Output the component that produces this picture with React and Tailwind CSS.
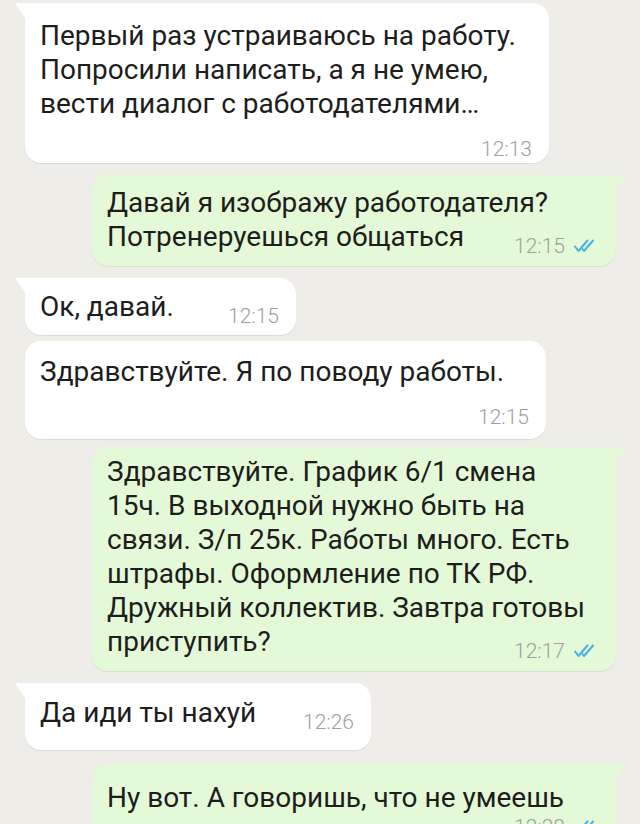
import React from 'react';

// pt / pb / gap are tuned per bubble to follow the screenshot
const messages = [
  {
    id: 1,
    out: false,
    tail: true,
    width: 'w-[524px]',
    pad: 'pt-[16px] pb-[6px]',
    gap: '',
    lines: ['Первый раз устраиваюсь на работу.', 'Попросили написать, а я не умею,', 'вести диалог с работодателями…'],
    time: '12:13',
    timeRow: 'mt-[16px]',
  },
  {
    id: 2,
    out: true,
    tail: true,
    width: 'w-[524px]',
    pad: 'pt-[11px] pb-[12px]',
    gap: 'mt-[12px]',
    lines: ['Давай я изображу работодателя?', 'Потренеруешься общаться'],
    time: '12:15',
  },
  {
    id: 3,
    out: false,
    tail: true,
    width: 'w-[271px]',
    pad: 'pt-[12px] pb-[11px]',
    gap: 'mt-[12px]',
    lines: ['Ок, давай.'],
    time: '12:15',
  },
  {
    id: 4,
    out: false,
    tail: false,
    width: 'w-[521px]',
    pad: 'pt-[14px] pb-[14px]',
    gap: 'mt-[6px]',
    lines: ['Здравствуйте. Я по поводу работы.'],
    time: '12:15',
    timeRow: 'mt-[16px]',
  },
  {
    id: 5,
    out: true,
    tail: true,
    width: 'w-[524px]',
    pad: 'pt-[8px] pb-[12px]',
    gap: 'mt-[8px]',
    lines: [
      'Здравствуйте. График 6/1 смена',
      '15ч. В выходной нужно быть на',
      'связи. З/п 25к. Работы много. Есть',
      'штрафы. Оформление по ТК РФ.',
      'Дружный коллектив. Завтра готовы',
      'приступить?',
    ],
    time: '12:17',
  },
  {
    id: 6,
    out: false,
    tail: true,
    width: 'w-[346px]',
    pad: 'pt-[13px] pb-[20px]',
    gap: 'mt-[12px]',
    lines: ['Да иди ты нахуй'],
    time: '12:26',
  },
  {
    id: 7,
    out: true,
    tail: true,
    width: 'w-[524px]',
    pad: 'pt-[17px] pb-[12px]',
    gap: 'mt-[14px]',
    lines: ['Ну вот. А говоришь, что не умеешь'],
    time: '12:28',
    timeRow: 'mt-[0px]',
  },
];

const Checks = () => (
  <svg width="26" height="14" viewBox="0 0 26 14" fill="none" stroke="#47b0e6" strokeWidth="2" strokeLinecap="round" strokeLinejoin="round">
    <path d="M2 7.5 L5.5 12 L14.5 1.5" />
    <path d="M9.5 10 L11 12 L20 1.5" />
  </svg>
);

const Meta = ({ time, out }) => (
  <span className="relative top-[2px] flex items-center gap-[8px] pl-4 text-[21px] leading-[20px] font-light text-[#9da19b] whitespace-nowrap">
    {time}
    {out && <Checks />}
  </span>
);

const Tail = ({ out }) =>
  out ? (
    <svg className="absolute right-[-10px] top-0" width="12" height="18" viewBox="0 0 12 18">
      <path d="M0 0 H10 Q12 0 11 1.5 L0 18 Z" fill="#e4f9d7" />
    </svg>
  ) : (
    <svg className="absolute left-[-10px] top-0" width="12" height="18" viewBox="0 0 12 18">
      <path d="M12 0 H2 Q0 0 1 1.5 L12 18 Z" fill="#ffffff" />
    </svg>
  );

const Bubble = ({ msg }) => {
  const { out, tail, width, pad, lines, time, timeRow } = msg;
  const bg = out ? 'bg-[#e4f9d7]' : 'bg-white';
  const corner = tail ? (out ? 'rounded-tr-none' : 'rounded-tl-none') : '';

  return (
    <div className={`relative ${width} ${bg} ${pad} rounded-[16px] ${corner} shadow-[0_1px_1px_rgba(0,0,0,0.08)] pl-[15px] pr-[17px]`}>
      {tail && <Tail out={out} />}
      <div className="text-[28px] leading-[34px] text-[#1d1d1d]">
        {lines.map((line, i) => {
          const last = i === lines.length - 1;
          if (last && !timeRow) {
            return (
              <div key={i} className="flex items-end justify-between">
                <span>{line}</span>
                <Meta time={time} out={out} />
              </div>
            );
          }
          return <div key={i}>{line}</div>;
        })}
      </div>
      {timeRow && (
        <div className={`${timeRow} flex justify-end`}>
          <Meta time={time} out={out} />
        </div>
      )}
    </div>
  );
};

export default function App() {
  return (
    <div className="h-[824px] overflow-hidden bg-[#eeede8] pt-[3px] font-['Roboto',sans-serif]">
      <div className="flex flex-col">
        {messages.map((msg) => (
          <div key={msg.id} className={`flex ${msg.gap} ${msg.out ? 'justify-end pr-[24px]' : 'justify-start pl-[25px]'}`}>
            <Bubble msg={msg} />
          </div>
        ))}
      </div>
    </div>
  );
}
